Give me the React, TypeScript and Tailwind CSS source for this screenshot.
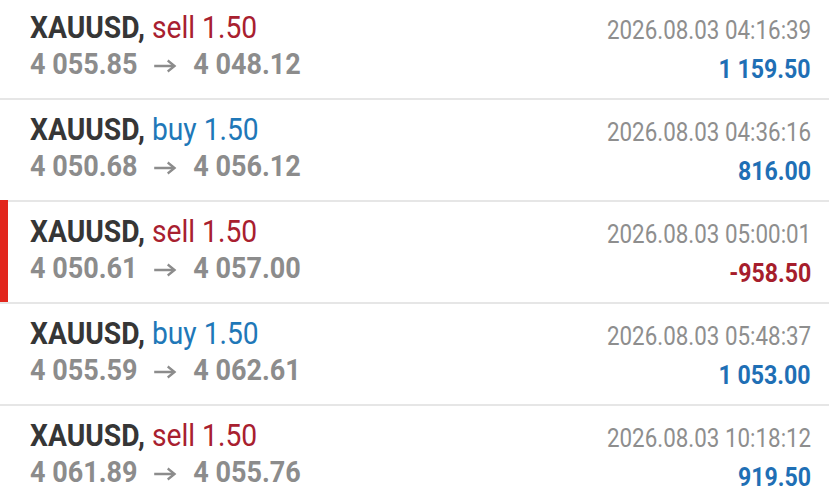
import React from "react";

type Deal = {
  side: "sell" | "buy";
  open: string;
  close: string;
  time: string;
  profit: string;
  loss?: boolean;
  marked?: boolean;
};

const deals: Deal[] = [
  { side: "sell", open: "4 055.85", close: "4 048.12", time: "2026.08.03 04:16:39", profit: "1 159.50" },
  { side: "buy", open: "4 050.68", close: "4 056.12", time: "2026.08.03 04:36:16", profit: "816.00" },
  { side: "sell", open: "4 050.61", close: "4 057.00", time: "2026.08.03 05:00:01", profit: "-958.50", loss: true, marked: true },
  { side: "buy", open: "4 055.59", close: "4 062.61", time: "2026.08.03 05:48:37", profit: "1 053.00" },
  { side: "sell", open: "4 061.89", close: "4 055.76", time: "2026.08.03 10:18:12", profit: "919.50" },
];

function Arrow() {
  return (
    <svg width="26" height="14" viewBox="0 0 26 14" className="mx-[18px] mt-[4px]" aria-hidden="true">
      <path d="M1 7 H23" stroke="#8c8c8c" strokeWidth="2.6" fill="none" />
      <path d="M16 1.5 L23.5 7 L16 12.5" stroke="#8c8c8c" strokeWidth="2.6" fill="none" strokeLinejoin="miter" />
    </svg>
  );
}

function Row({ d }: { d: Deal }) {
  return (
    <div className="relative flex h-[102px] border-b-2 border-[#e6e6e6] bg-white pl-[30px] pr-[18px]">
      {d.marked && <div className="absolute -top-[2px] left-0 bottom-0 w-[8px] bg-[#e2261c]" />}
      <div className="flex flex-1 flex-col items-start pt-[12px]">
        <div className="origin-left scale-x-[0.91] text-[31px] leading-[36px] whitespace-nowrap">
          <span className="font-bold text-[#363636]">XAUUSD,</span>{" "}
          <span className={d.side === "sell" ? "text-[#a8202f]" : "text-[#1f78b8]"}>
            {d.side} 1.50
          </span>
        </div>
        <div className="flex origin-left scale-x-[0.9] items-center text-[30px] leading-[36px] font-bold text-[#8c8c8c] whitespace-nowrap">
          <span>{d.open}</span>
          <Arrow />
          <span>{d.close}</span>
        </div>
      </div>
      <div className="flex flex-col items-end pt-[18px]">
        <div className="origin-right scale-x-[0.895] text-[25px] leading-[30px] text-[#8e8e8e] whitespace-nowrap">
          {d.time}
        </div>
        <div
          className={
            "mt-[8px] origin-right scale-x-[0.89] text-[26px] leading-[30px] font-bold whitespace-nowrap " +
            (d.loss ? "text-[#a61d2c]" : "text-[#1f6fb5]")
          }
        >
          {d.profit}
        </div>
      </div>
    </div>
  );
}

export default function App() {
  return (
    <div
      className="h-[498px] w-[829px] overflow-hidden bg-white"
      style={{ fontFamily: "Roboto, 'Liberation Sans', sans-serif" }}
    >
      <div className="-mt-[2px]">
        {deals.map((d, i) => (
          <Row key={i} d={d} />
        ))}
      </div>
    </div>
  );
}
